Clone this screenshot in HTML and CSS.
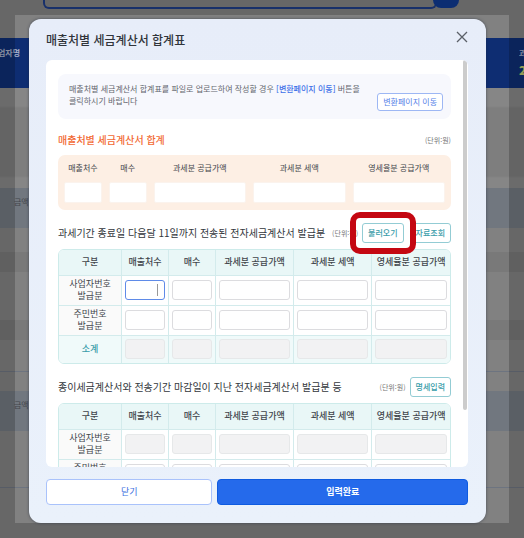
FILE: index.html
```html
<!DOCTYPE html>
<html lang="ko">
<head>
<meta charset="utf-8">
<title>매출처별 세금계산서 합계표</title>
<link rel="stylesheet" href="styles.css">
</head>
<body>
<div class="page" aria-hidden="true">
  <div class="topbar"><div class="search"></div><div class="search-dot"></div></div>
  <div class="hero"><div class="hero-left">업자명</div><div class="hero-right"><span>과</span><b>2</b></div></div>
  <div class="block tall"></div>
  <div class="band">금액</div>
  <div class="block"></div>
  <div class="stripe"></div>
  <div class="block mid"></div>
  <div class="stripe"></div>
  <div class="block lined"></div>
  <div class="block short"></div>
  <div class="band">금액</div>
  <div class="block lined large"></div>
  <div class="block rest"></div>
</div>
<div class="frame">
  <section class="modal" role="dialog" aria-labelledby="modal-title">
    <header class="modal-head">
      <h1 id="modal-title">매출처별 세금계산서 합계표</h1>
      <button class="close" type="button" aria-label="닫기">
        <svg viewBox="0 0 12 12" width="12" height="12"><path d="M1 1L11 11M11 1L1 11" fill="none" stroke="#5b6068" stroke-width="1.3"/></svg>
      </button>
    </header>

    <div class="scroller">
      <div class="thumb"></div>
      <div class="notice">
        <p>매출처별 세금계산서 합계표를 파일로 업로드하여 작성할 경우 <strong>[변환페이지 이동]</strong> 버튼을<br>클릭하시기 바랍니다</p>
        <button class="small blue" type="button">변환페이지 이동</button>
      </div>

      <div class="section-head total-head">
        <h2>매출처별 세금계산서 합계</h2>
        <span class="unit">(단위:원)</span>
      </div>
      <div class="totals">
        <label>매출처수<input type="text"></label>
        <label>매수<input type="text"></label>
        <label>과세분 공급가액<input type="text"></label>
        <label>과세분 세액<input type="text"></label>
        <label>영세율분 공급가액<input type="text"></label>
      </div>

      <div class="section-head">
        <h2>과세기간 종료일 다음달 11일까지 전송된 전자세금계산서 발급분</h2>
        <span class="unit">(단위:원)</span>
        <span class="marked"><button class="small teal" type="button">불러오기</button></span>
        <button class="small teal" type="button">자료조회</button>
      </div>
      <div class="table-box">
      <table>
        <colgroup><col class="c-name"><col class="c-count"><col class="c-count"><col><col><col></colgroup>
        <thead><tr><th>구분</th><th>매출처수</th><th>매수</th><th>과세분 공급가액</th><th>과세분 세액</th><th>영세율분 공급가액</th></tr></thead>
        <tbody>
          <tr><th scope="row">사업자번호<br>발급분</th>
            <td><span class="focused"><input type="text" aria-label="사업자번호 매출처수"></span></td>
            <td><input type="text" aria-label="사업자번호 매수"></td>
            <td><input type="text" aria-label="사업자번호 과세분 공급가액"></td>
            <td><input type="text" aria-label="사업자번호 과세분 세액"></td>
            <td><input type="text" aria-label="사업자번호 영세율분 공급가액"></td></tr>
          <tr><th scope="row">주민번호<br>발급분</th>
            <td><input type="text" aria-label="주민번호 매출처수"></td>
            <td><input type="text" aria-label="주민번호 매수"></td>
            <td><input type="text" aria-label="주민번호 과세분 공급가액"></td>
            <td><input type="text" aria-label="주민번호 과세분 세액"></td>
            <td><input type="text" aria-label="주민번호 영세율분 공급가액"></td></tr>
          <tr class="subtotal"><th scope="row">소계</th>
            <td><input type="text" disabled aria-label="소계 매출처수"></td>
            <td><input type="text" disabled aria-label="소계 매수"></td>
            <td><input type="text" disabled aria-label="소계 과세분 공급가액"></td>
            <td><input type="text" disabled aria-label="소계 과세분 세액"></td>
            <td><input type="text" disabled aria-label="소계 영세율분 공급가액"></td></tr>
        </tbody>
      </table>
      </div>

      <div class="section-head">
        <h2>종이세금계산서와 전송기간 마감일이 지난 전자세금계산서 발급분 등</h2>
        <span class="unit">(단위:원)</span>
        <button class="small teal" type="button">명세입력</button>
      </div>
      <div class="table-box">
      <table>
        <colgroup><col class="c-name"><col class="c-count"><col class="c-count"><col><col><col></colgroup>
        <thead><tr><th>구분</th><th>매출처수</th><th>매수</th><th>과세분 공급가액</th><th>과세분 세액</th><th>영세율분 공급가액</th></tr></thead>
        <tbody>
          <tr><th scope="row">사업자번호<br>발급분</th>
            <td><input type="text" disabled aria-label="사업자번호 매출처수"></td>
            <td><input type="text" disabled aria-label="사업자번호 매수"></td>
            <td><input type="text" disabled aria-label="사업자번호 과세분 공급가액"></td>
            <td><input type="text" disabled aria-label="사업자번호 과세분 세액"></td>
            <td><input type="text" disabled aria-label="사업자번호 영세율분 공급가액"></td></tr>
          <tr><th scope="row">주민번호<br>발급분</th>
            <td><input type="text" aria-label="주민번호 매출처수"></td>
            <td><input type="text" aria-label="주민번호 매수"></td>
            <td><input type="text" aria-label="주민번호 과세분 공급가액"></td>
            <td><input type="text" aria-label="주민번호 과세분 세액"></td>
            <td><input type="text" aria-label="주민번호 영세율분 공급가액"></td></tr>
        </tbody>
      </table>
      </div>
    </div>

    <footer class="actions">
      <button class="cancel" type="button">닫기</button>
      <button class="submit" type="button">입력완료</button>
    </footer>
  </section>
</div>
</body>
</html>
```
FILE: styles.css
```css
* { box-sizing: border-box; }

body {
  margin: 0;
  height: 100vh;
  display: grid;
  grid-template: minmax(0, 1fr) / minmax(0, 1fr);
  overflow: hidden;
  color: #41454b;
  font-family: "Noto Sans CJK KR", "Noto Sans", sans-serif;
  font-size: 8px;
  line-height: 12px;
}

h1, h2, p { margin: 0; }
button, input { font: inherit; margin: 0; min-width: 0; }

/* Dimmed page behind the dialog */
.page, .frame { grid-area: 1 / 1; }
.page {
  display: flex;
  flex-direction: column;
  overflow: hidden;
  background: #818181;
}
.page > div { flex: none; }
.topbar { height: 38px; display: flex; padding-left: 43px; }
.search {
  width: 82%;
  height: 9px;
  border: 2px solid #1f3c85;
  border-top: 0;
  border-radius: 0 0 6px 6px;
}
.search-dot {
  width: 26px;
  height: 8px;
  margin-left: -4px;
  border-radius: 0 0 13px 13px;
  background: #10398f;
}
.hero {
  height: 50px;
  display: flex;
  justify-content: space-between;
  padding-top: 9px;
  background: #0e2d72;
  color: #a6b0c8;
  font-weight: 700;
}
.hero-left { margin-left: -2px; }
.hero-right { width: 5px; overflow: hidden; display: grid; align-content: start; gap: 5px; }
.hero-right b { color: #b9c46c; font-size: 12px; }
.block { height: 24px; }
.block.tall { height: 100px; background: linear-gradient(#868686 18px, #7e7e7e 20px, #7e7e7e 88px, #868686 90px); }
.block.mid { height: 48px; }
.block.lined { height: 32px; border-bottom: 1px solid #6d7480; }
.block.lined.large { height: 57px; }
.block.short { height: 19px; }
.block.rest { height: 60px; }
.stripe { height: 20px; background: #797979; }
.band { height: 40px; padding: 8px 14px; background: #71777f; color: #42464c; }

/* Outer margin of the viewport is darkened further */
.frame {
  display: flex;
  border: 15px solid rgba(0, 0, 0, 0.2);
  padding: 4px 23px 0 14px;
}
.modal {
  flex: 1;
  min-width: 0;
  display: flex;
  flex-direction: column;
  padding: 0 18px 18px 17px;
  border-radius: 12px;
  background: linear-gradient(#e7edf9, #eaf1fb);
  box-shadow: 0 0 3px rgba(30, 40, 60, 0.6);
}
.modal-head {
  height: 41px;
  flex: none;
  display: flex;
  align-items: center;
  justify-content: space-between;
}
.modal-head h1 { font-size: 12px; font-weight: 500; color: #30343a; line-height: 16px; }
.close { display: flex; padding: 0 0 6px; border: 0; background: none; }

.scroller {
  flex: 1;
  min-height: 0;
  position: relative;
  overflow: hidden;
  padding: 14px 17px 0 12px;
  border-radius: 6px;
  background: #fff;
}
.thumb {
  position: absolute;
  top: 0;
  right: 1px;
  width: 4px;
  height: 86%;
  border-radius: 2px;
  background: #ccc;
}

.notice {
  display: flex;
  flex-wrap: wrap;
  height: 45px;
  padding: 9px 8px 8px 11px;
  border-radius: 8px;
  background: #f7f8fd;
  color: #63666d;
}
.notice p { flex: 1; white-space: nowrap; }
.notice strong { color: #3d6fe8; font-weight: 500; }
.notice button { align-self: flex-end; }

.small {
  flex: none;
  height: 18px;
  padding: 0 5px;
  border: 1px solid;
  border-radius: 3px;
  background: #fff;
  line-height: 14px;
  white-space: nowrap;
}
.small.blue { color: #5580e8; border-color: #9db7f4; }
.small.teal { height: 20px; color: #3a9daa; border-color: #93ccd4; font-weight: 500; }

.section-head {
  height: 20px;
  margin: 13px 0 6px;
  display: flex;
  align-items: center;
  gap: 4px;
}
.section-head h2 {
  flex: 1;
  min-width: 0;
  font-size: 10px;
  font-weight: 400;
  color: #33373c;
  white-space: nowrap;
}
.total-head { margin: 11px 0 5px; }
.total-head h2 { color: #f26a35; font-weight: 500; }
.unit { font-size: 7px; color: #777; white-space: nowrap; }

.marked { position: relative; display: flex; margin-right: 2px; }
.marked::after {
  content: "";
  position: absolute;
  inset: -11px -12px;
  border: 6px solid #c40712;
  border-radius: 10px;
  pointer-events: none;
}

.totals {
  display: grid;
  grid-template-columns: 38fr 38fr 93fr 93fr 93fr;
  gap: 7px;
  padding: 7px 6px;
  border-radius: 7px;
  background: #fdefe4;
}
.totals label { display: grid; gap: 8px; text-align: center; white-space: nowrap; min-width: 0; }
.totals input { width: 100%; height: 21px; border: 1px solid #fbf3ed; border-radius: 2px; background: #fff; }

.table-box { overflow: hidden; border: 1px solid #cdebea; border-radius: 6px; }
table { width: 100%; table-layout: fixed; border-collapse: collapse; }
.c-name { width: 16%; }
.c-count { width: 12%; }
th, td { padding: 0; border: 1px solid #d3ebec; }
tr > :first-child { border-left: 0; }
tr > :last-child { border-right: 0; }
thead th { border-top: 0; }
tbody tr:last-child > * { border-bottom: 0; }
thead th { height: 25px; background: #e9f7f7; font-size: 9px; font-weight: 500; white-space: nowrap; }
tbody th { height: 30px; background: #fafafa; font-size: 9px; font-weight: 400; line-height: 12px; }
td { padding: 0 3px; }
td input {
  display: block;
  width: 100%;
  height: 20px;
  border: 1px solid #dcdcdf;
  border-radius: 3px;
  background: #fff;
}
td input:disabled { background: #f2f2f3; border-color: #e6e8e9; }
.subtotal > * { background: #f0fafa; }
.subtotal th { height: 28px; background: #f0fafa; color: #3a9daa; font-weight: 500; }

.focused { position: relative; display: block; }
.focused input { border-color: #5f8be8; }
.focused::after {
  content: "";
  position: absolute;
  top: 4px;
  right: 7px;
  width: 1px;
  height: 12px;
  background: #999;
}

.actions { flex: none; display: flex; gap: 5px; margin-top: 12px; }
.actions button { height: 26px; border-radius: 4px; font-size: 9px; padding: 0; }
.cancel { flex: 166; border: 1px solid #a9c2fb; background: #fff; color: #3d6fe0; }
.submit { flex: 251; border: 1px solid #0f5be0; background: #256aeb; color: #fff; font-weight: 700; }
```
